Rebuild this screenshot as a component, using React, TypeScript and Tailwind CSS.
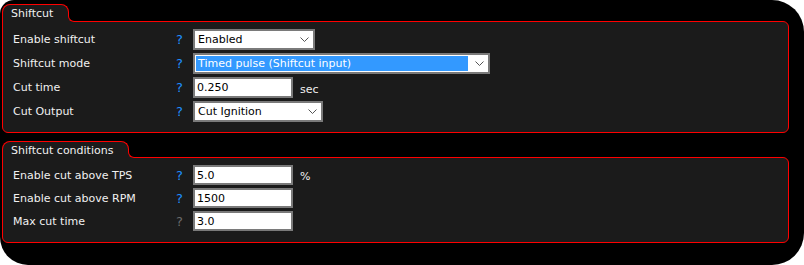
import type { ReactNode } from "react";

const font = { fontFamily: '"DejaVu Sans", Verdana, sans-serif' };

function Chevron() {
  return (
    <svg width="9" height="5" viewBox="0 0 9 5" className="shrink-0">
      <path d="M0.5 0.5 L4.5 4.5 L8.5 0.5" fill="none" stroke="#555" strokeWidth="1" />
    </svg>
  );
}

function Select({ value, width, highlight }: { value: string; width: string; highlight?: boolean }) {
  return (
    <div className={`${width} flex h-[21px] items-center border-2 border-[#7a7a7a] bg-white pr-[4px]`}>
      {highlight ? (
        <div className="ml-px mr-[7px] flex h-[15px] flex-1 items-center bg-[#3399ff] pl-[2px] text-white">
          {value}
        </div>
      ) : (
        <div className="flex-1 pl-[3px] text-black">{value}</div>
      )}
      <Chevron />
    </div>
  );
}

function TextInput({ value, h }: { value: string; h: string }) {
  return (
    <div className={`${h} flex w-[100px] items-center border-2 border-[#7a7a7a] bg-white pl-[2px] text-black`}>
      {value}
    </div>
  );
}

function Row({ label, children, muted }: { label: string; children: ReactNode; muted?: boolean }) {
  return (
    <div className="flex items-center">
      <div className="w-[163px] text-[#f0f0f0]">{label}</div>
      <div className={`w-[17px] text-[13px] ${muted ? "text-[#6b6b6b]" : "text-[#1e90ff]"}`}>?</div>
      {children}
    </div>
  );
}

function Panel({
  title,
  tabH,
  bodyH,
  children,
}: {
  title: string;
  tabH: string;
  bodyH: string;
  children: ReactNode;
}) {
  return (
    <div className="w-[787px]">
      <div className="flex items-end">
        <div
          className={`${tabH} relative z-10 -mb-px rounded-t-[8px] border border-b-0 border-[#ff0000] bg-[#1b1b1b] pl-[8px] pr-[15px] pt-[2px] text-[#f0f0f0]`}
        >
          {title}
        </div>
        <div className="relative z-20 -mb-px -ml-px h-[7px] w-[7px] bg-[#1b1b1b]">
          <div className="h-full w-full rounded-bl-[6px] border-b border-l border-[#ff0000] bg-black" />
        </div>
      </div>
      <div
        className={`${bodyH} rounded-b-[6px] rounded-tr-[6px] border border-[#ff0000] bg-[#1b1b1b] pl-[10px] pt-[7px]`}
      >
        {children}
      </div>
    </div>
  );
}

export default function App() {
  return (
    <div className="h-[265px] w-[804px] bg-white" style={font}>
      <div className="flex h-full w-full flex-col gap-[8px] rounded-bl-[28px] rounded-br-[32px] rounded-tl-[14px] rounded-tr-[32px] bg-black pl-[2px] pt-[4px] text-[11px] leading-[13px]">
        <Panel title="Shiftcut" tabH="h-[18px]" bodyH="h-[112px]">
          <div className="flex flex-col gap-[3px]">
            <Row label="Enable shiftcut">
              <Select value="Enabled" width="w-[122px]" />
            </Row>
            <Row label="Shiftcut mode">
              <Select value="Timed pulse (Shiftcut input)" width="w-[297px]" highlight />
            </Row>
            <Row label="Cut time">
              <TextInput value="0.250" h="h-[21px]" />
              <span className="ml-[7px] mt-[3px] text-[#f0f0f0]">sec</span>
            </Row>
            <Row label="Cut Output">
              <Select value="Cut Ignition" width="w-[130px]" />
            </Row>
          </div>
        </Panel>
        <Panel title="Shiftcut conditions" tabH="h-[17px]" bodyH="h-[86px]">
          <div className="flex flex-col gap-[3px]">
            <Row label="Enable cut above TPS">
              <TextInput value="5.0" h="h-[20px]" />
              <span className="ml-[7px] mt-[3px] text-[#f0f0f0]">%</span>
            </Row>
            <Row label="Enable cut above RPM">
              <TextInput value="1500" h="h-[20px]" />
            </Row>
            <Row label="Max cut time" muted>
              <TextInput value="3.0" h="h-[20px]" />
            </Row>
          </div>
        </Panel>
      </div>
    </div>
  );
}
